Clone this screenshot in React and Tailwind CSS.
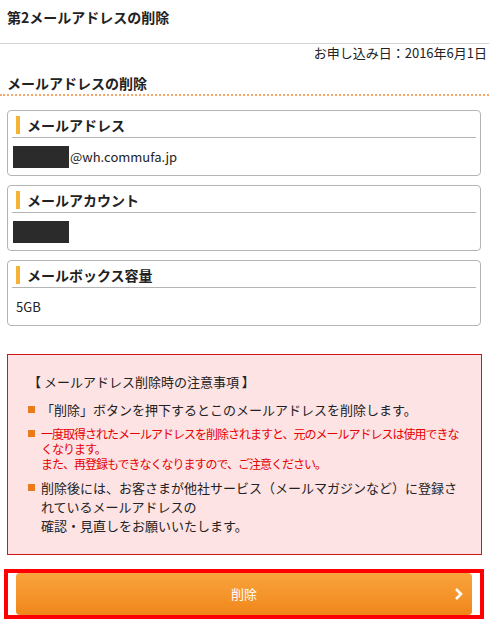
import React from "react";

const font = { fontFamily: '"Noto Sans CJK JP", "Noto Sans", sans-serif' };

function Card({ title, children }) {
  return (
    <div className="mx-[7px] w-[474px] rounded-[4px] border border-[#b4b4b4] bg-white">
      <div className="mx-[4px] flex h-[27px] items-center border-b border-[#b4b4b4] pt-[1px]">
        <span className="ml-[4px] mr-[7px] h-[18px] w-[4px] bg-[#f5b335]" />
        <span className="text-[14px] font-bold leading-[18px] text-[#222]">{title}</span>
      </div>
      <div className="flex h-[37px] items-center px-[5px]">{children}</div>
    </div>
  );
}

function Bullet({ red, children }) {
  return (
    <div className="flex">
      <span className={"h-[7px] w-[7px] shrink-0 bg-[#ea7a1c] " + (red ? "mt-[4px]" : "mt-[6px]")} />
      <div
        className={
          "ml-[6px] " +
          (red
            ? "text-[12px] leading-[15px] tracking-[-1px] text-[#e60000]"
            : "text-[13px] leading-[19px] text-[#222]")
        }
      >
        {children}
      </div>
    </div>
  );
}

export default function App() {
  return (
    <div className="w-[489px] bg-white text-[#222]" style={font}>
      <div className="h-[44px] border-b border-[#d4d4d4] px-[7px] pt-[8px] text-[14px] font-bold leading-[18px]">
        第2メールアドレスの削除
      </div>
      <div className="pr-[2px] text-right text-[13px] leading-[17px]">お申し込み日：2016年6月1日</div>
      <div className="mt-[13px] h-[20px] px-[7px] text-[14px] font-bold leading-[18px]">メールアドレスの削除</div>
      <div className="border-b-2 border-dotted border-[#f5a86a]" />
      <div className="mt-[14px] flex flex-col gap-[9px]">
        <Card title="メールアドレス">
          <span className="h-[22px] w-[56px] bg-[#2b2b2b]" />
          <span className="ml-[1px] text-[13px] text-[#222]">@wh.commufa.jp</span>
        </Card>
        <Card title="メールアカウント">
          <span className="h-[22px] w-[56px] bg-[#2b2b2b]" />
        </Card>
        <Card title="メールボックス容量">
          <span className="pl-[3px] text-[13px] text-[#222]">5GB</span>
        </Card>
      </div>
      <div className="mx-[7px] mt-[28px] h-[201px] w-[475px] border border-[#d01818] bg-[#fde3e4] pl-[20px] pr-[15px] pt-[17px]">
        <div className="text-[13px] leading-[19px]">【 メールアドレス削除時の注意事項 】</div>
        <div className="mt-[9px] flex flex-col gap-[7px]">
          <Bullet>「削除」ボタンを押下するとこのメールアドレスを削除します。</Bullet>
          <Bullet red>
            一度取得されたメールアドレスを削除されますと、元のメールアドレスは使用できなくなります。
            <br />
            また、再登録もできなくなりますので、ご注意ください。
          </Bullet>
          <Bullet>
            削除後には、お客さまが他社サービス（メールマガジンなど）に登録されているメールアドレスの
            <br />
            確認・見直しをお願いいたします。
          </Bullet>
        </div>
      </div>
      <div className="ml-[4px] mt-[14px] w-[480px] border-4 border-[#ff0000] bg-white px-[8px]">
        <button className="relative flex h-[42px] w-full items-center justify-center rounded-[4px] bg-gradient-to-b from-[#f9a43c] to-[#f08618] text-[13px] text-white">
          削除
          <svg className="absolute right-[8px] top-[14px]" width="10" height="14" viewBox="0 0 10 14">
            <path d="M2 2 L7 7 L2 12" fill="none" stroke="white" strokeWidth="2.6" />
          </svg>
        </button>
      </div>
    </div>
  );
}
